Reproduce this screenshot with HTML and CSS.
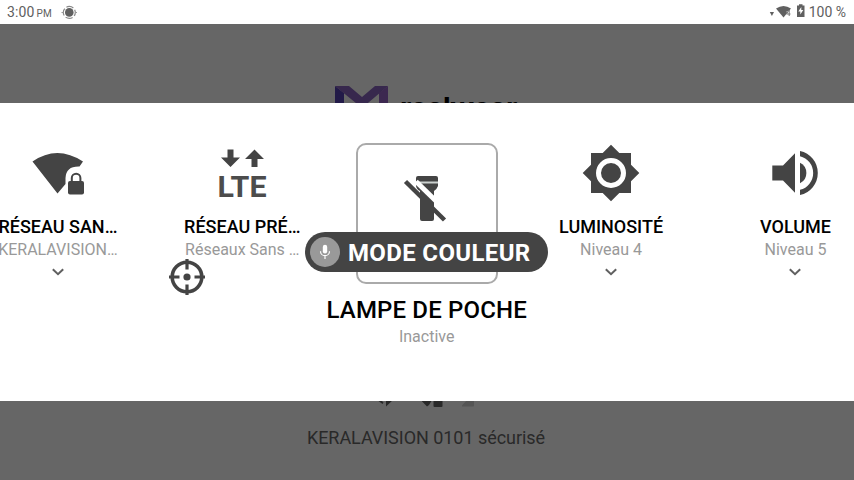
FILE: index.html
```html
<!DOCTYPE html>
<html lang="fr">
<head>
<meta charset="utf-8">
<title>Lampe de poche</title>
<link rel="stylesheet" href="styles.css">
</head>
<body>
<header class="status">
  <span class="time">3:00</span><span class="meridiem">PM</span>
  <svg class="status-dot" width="16" height="14" viewBox="61 5 16 14"><circle cx="69.300" cy="12.400" r="6" fill="none" stroke="#888" stroke-width="1.200" stroke-dasharray="7.400 2" stroke-dashoffset="3.700"/><circle cx="69.300" cy="12.400" r="4.300" fill="#606060"/><path d="M61.500 12.500h2M75 12.500h2" stroke="#999"/></svg>
  <span class="spacer"></span>
  <svg class="status-icons" width="37" height="16" viewBox="769 4 37 16" fill="#606060"><path d="M769.800 12h4.200l-2.100 4z"/><path d="M776 8.500q7.500-5 15 0l-7.500 9z"/><path d="M786.500 11h4v5h-3z" fill="#fff" opacity=".6"/><path d="M789.200 10v6M786.500 14h4M789 10l-2.500 4" fill="none" stroke="#777"/><path d="M797 5.500h2V4.200h3.500v1.300h2V17h-7.500z"/><path d="M801.300 7l-3 4.500h2v3l3-4.500h-2z" fill="#fff"/></svg>
  <span class="battery">100 %</span>
</header>
<main class="screen">
  <div class="brand">
    <svg width="53" height="48" viewBox="335 85 53 48"><path d="M335 86l9 7v40h-9z" fill="#221a48"/><path d="M335 86h14l13 11 13-11h13l-26 22z" fill="#37284d"/><path d="M388 86l-9 7v40h9z" fill="#3c2850"/></svg>
    <span>realwear</span>
  </div>
  <div class="network">
    <svg width="100" height="27" viewBox="376 381 100 27" fill="#292929"><path d="M377.500 401l2-1.500 3 3-1 1.500zM385 406.500v-14h7v7.500z"/><path d="M412 392q12-10 24 0l-8 13-2 1.500z"/><rect x="432.500" y="396" width="9" height="11" rx="1"/><path d="M461 405.500l12-13v13q0 1-1 1h-11z" fill="#555"/></svg>
    <p>KERALAVISION 0101 sécurisé</p>
  </div>
</main>
<section class="panel">
  <div class="carousel">
    <article class="item">
      <svg class="icon" width="60" height="60" viewBox="28 143 60 60" fill="#444"><path d="M32.500 161.500Q57 144.500 83 161.500L79.500 166.500Q66 166 65.500 178V184L57.500 193.500z"/><rect x="68" y="181" width="16" height="13.500" rx="2"/><path d="M71.800 182v-4a4.300 4.300 0 0 1 8.600 0v4" fill="none" stroke="#444" stroke-width="2"/></svg>
      <h2>RÉSEAU SAN…</h2><p>KERALAVISION…</p>
      <svg class="chevron" width="14" height="8" viewBox="0 0 14 8"><path d="M1.800 1.200L7 6.200l5.200-5"/></svg>
    </article>
    <article class="item">
      <svg class="icon" width="60" height="60" viewBox="212 143 60 60" fill="#444"><path d="M227.500 149.500h6v8h6.500l-9.500 9.500-9.500-9.500h6.500zM251.500 167h6v-8h6.500l-9.500-9.500-9.500 9.500h6.500z"/><text class="lte" x="217.500" y="196.500" textLength="49" lengthAdjust="spacingAndGlyphs">LTE</text></svg>
      <h2>RÉSEAU PRÉ…</h2><p>Réseaux Sans …</p>
    </article>
    <article class="item selected">
      <div class="frame"><svg width="50" height="56" viewBox="402 170 50 56" fill="#444"><path d="M416 178q0-2 2-2h18q2 0 2 2v8q-1 3-4 5v28q0 2-2 2h-10q-2 0-2-2v-28q-4-2-4-6z"/><path d="M416 182.500h22" stroke="#cbd0ce" stroke-width="2"/><path d="M416 181.500l20 19.500" stroke="#fff" stroke-width="5"/><path d="M405.500 181.500L444.500 220" stroke="#444" stroke-width="4.500"/></svg></div>
      <h1>LAMPE DE POCHE</h1><p>Inactive</p>
    </article>
    <article class="item">
      <svg class="icon" width="60" height="60" viewBox="581 143 60 60" fill="#444"><path d="M611 144.700l8.300 8.300H631v11.700l8.300 8.300-8.300 8.300V193h-11.700l-8.300 8.300-8.300-8.300H591v-11.700l-8.300-8.300 8.300-8.300V153h11.700z"/><circle cx="611" cy="173" r="12.500" fill="#444" stroke="#fff" stroke-width="5"/></svg>
      <h2>LUMINOSITÉ</h2><p>Niveau 4</p>
      <svg class="chevron" width="14" height="8" viewBox="0 0 14 8"><path d="M1.800 1.200L7 6.200l5.200-5"/></svg>
    </article>
    <article class="item">
      <svg class="icon" width="60" height="60" viewBox="765 143 60 60" fill="#444"><path d="M772.300 165.500H783L795 153.300v39.400L783 180.500h-10.700z"/><path d="M800 162.700a11.500 11.500 0 0 1 0 20.600z"/><path d="M800 151a22.500 22.500 0 0 1 0 44v-5.200a17.300 17.300 0 0 0 0-33.600z"/></svg>
      <h2>VOLUME</h2><p>Niveau 5</p>
      <svg class="chevron" width="14" height="8" viewBox="0 0 14 8"><path d="M1.800 1.200L7 6.200l5.200-5"/></svg>
    </article>
  </div>
</section>
<svg class="cursor" width="36" height="36" viewBox="0 0 36 36"><circle cx="18" cy="18" r="14.800" fill="none" stroke="#444" stroke-width="3.600"/><path d="M18 0v10.500M18 25.500V36M0 18h10.500M25.500 18H36" stroke="#444" stroke-width="3.200"/><circle cx="18" cy="18" r="3.600" fill="#444"/></svg>
<div class="voice">
  <span class="mic"><svg width="12" height="16" viewBox="0 0 12 16"><rect x="3.800" y="0.800" width="4.400" height="8.700" rx="2.200" fill="#fff"/><path d="M1.500 7.200a4.500 4.500 0 0 0 9 0M6 12v3" fill="none" stroke="#fff" stroke-width="1.200"/></svg></span>
  <span class="command">MODE COULEUR</span>
</div>
</body>
</html>
```
FILE: styles.css
```css
* { box-sizing: border-box; }
body { margin: 0; width: 854px; height: 480px; overflow: hidden; position: relative; background: #fff; font-family: Roboto, sans-serif; }
h1, h2, p { margin: 0; }
svg { display: block; flex: none; }
.status { height: 24px; padding: 0 8px 0 7px; display: flex; align-items: center; color: #606060; font-size: 14px; line-height: 24px; }
.time { letter-spacing: .15px; }
.meridiem { font-size: 10px; margin: 3px 0 0 2px; }
.status-dot { margin-left: 9px; }
.spacer { flex: 1; }
.status-icons { margin-right: 3px; }
.battery { letter-spacing: 0; white-space: nowrap; }
.screen { height: 456px; background: #666; display: flex; flex-direction: column; align-items: center; justify-content: space-between; padding: 61px 0 30px; }
.brand { display: flex; gap: 12px; height: 48px; width: 184px; }
.brand span { font: 700 28px/34px Inter, sans-serif; color: #000; padding-top: 6px; letter-spacing: -.3px; }
.network { display: flex; flex-direction: column; align-items: center; width: 100%; color: #292929; }
.network p { font-size: 18px; line-height: 24px; margin-top: 18px; margin-right: 2px; white-space: nowrap; letter-spacing: -.04px; }
.panel { position: absolute; left: 0; top: 103px; width: 854px; height: 298px; overflow: hidden; background: #fff; }
.carousel { display: grid; grid-template-columns: repeat(5, 184.4px); margin-left: -34.3px; padding-top: 40px; }
.item { display: flex; flex-direction: column; align-items: center; white-space: nowrap; }
.item h2 { font-size: 18px; line-height: 24px; font-weight: 500; margin-top: 12px; }
.item p { font-size: 16px; line-height: 20px; color: #999; margin-top: 1px; }
.item h1 { font-size: 24px; line-height: 30px; font-weight: 500; margin-top: 11px; letter-spacing: .15px; }
.item.selected p { margin-top: 2px; }
.lte { font-size: 30px; font-weight: 700; fill: #4c4c4c; }
.chevron { margin-top: 8px; fill: none; stroke: #606060; stroke-width: 2; }
.frame { width: 142px; height: 141px; border: 2px solid #aaa; border-radius: 10px; display: flex; justify-content: center; padding-top: 25px; }
.cursor { position: absolute; left: 169px; top: 259px; }
.voice { position: absolute; left: 305px; top: 232px; width: 243px; height: 40px; border-radius: 20px; background: #444; display: flex; align-items: center; padding-left: 5px; gap: 8px; }
.mic { width: 30px; height: 30px; border-radius: 50%; background: #999; display: flex; align-items: center; justify-content: center; }
.command { color: #fff; font-size: 24px; font-weight: 700; line-height: 40px; white-space: nowrap; letter-spacing: .35px; padding-top: 1px; }
```
